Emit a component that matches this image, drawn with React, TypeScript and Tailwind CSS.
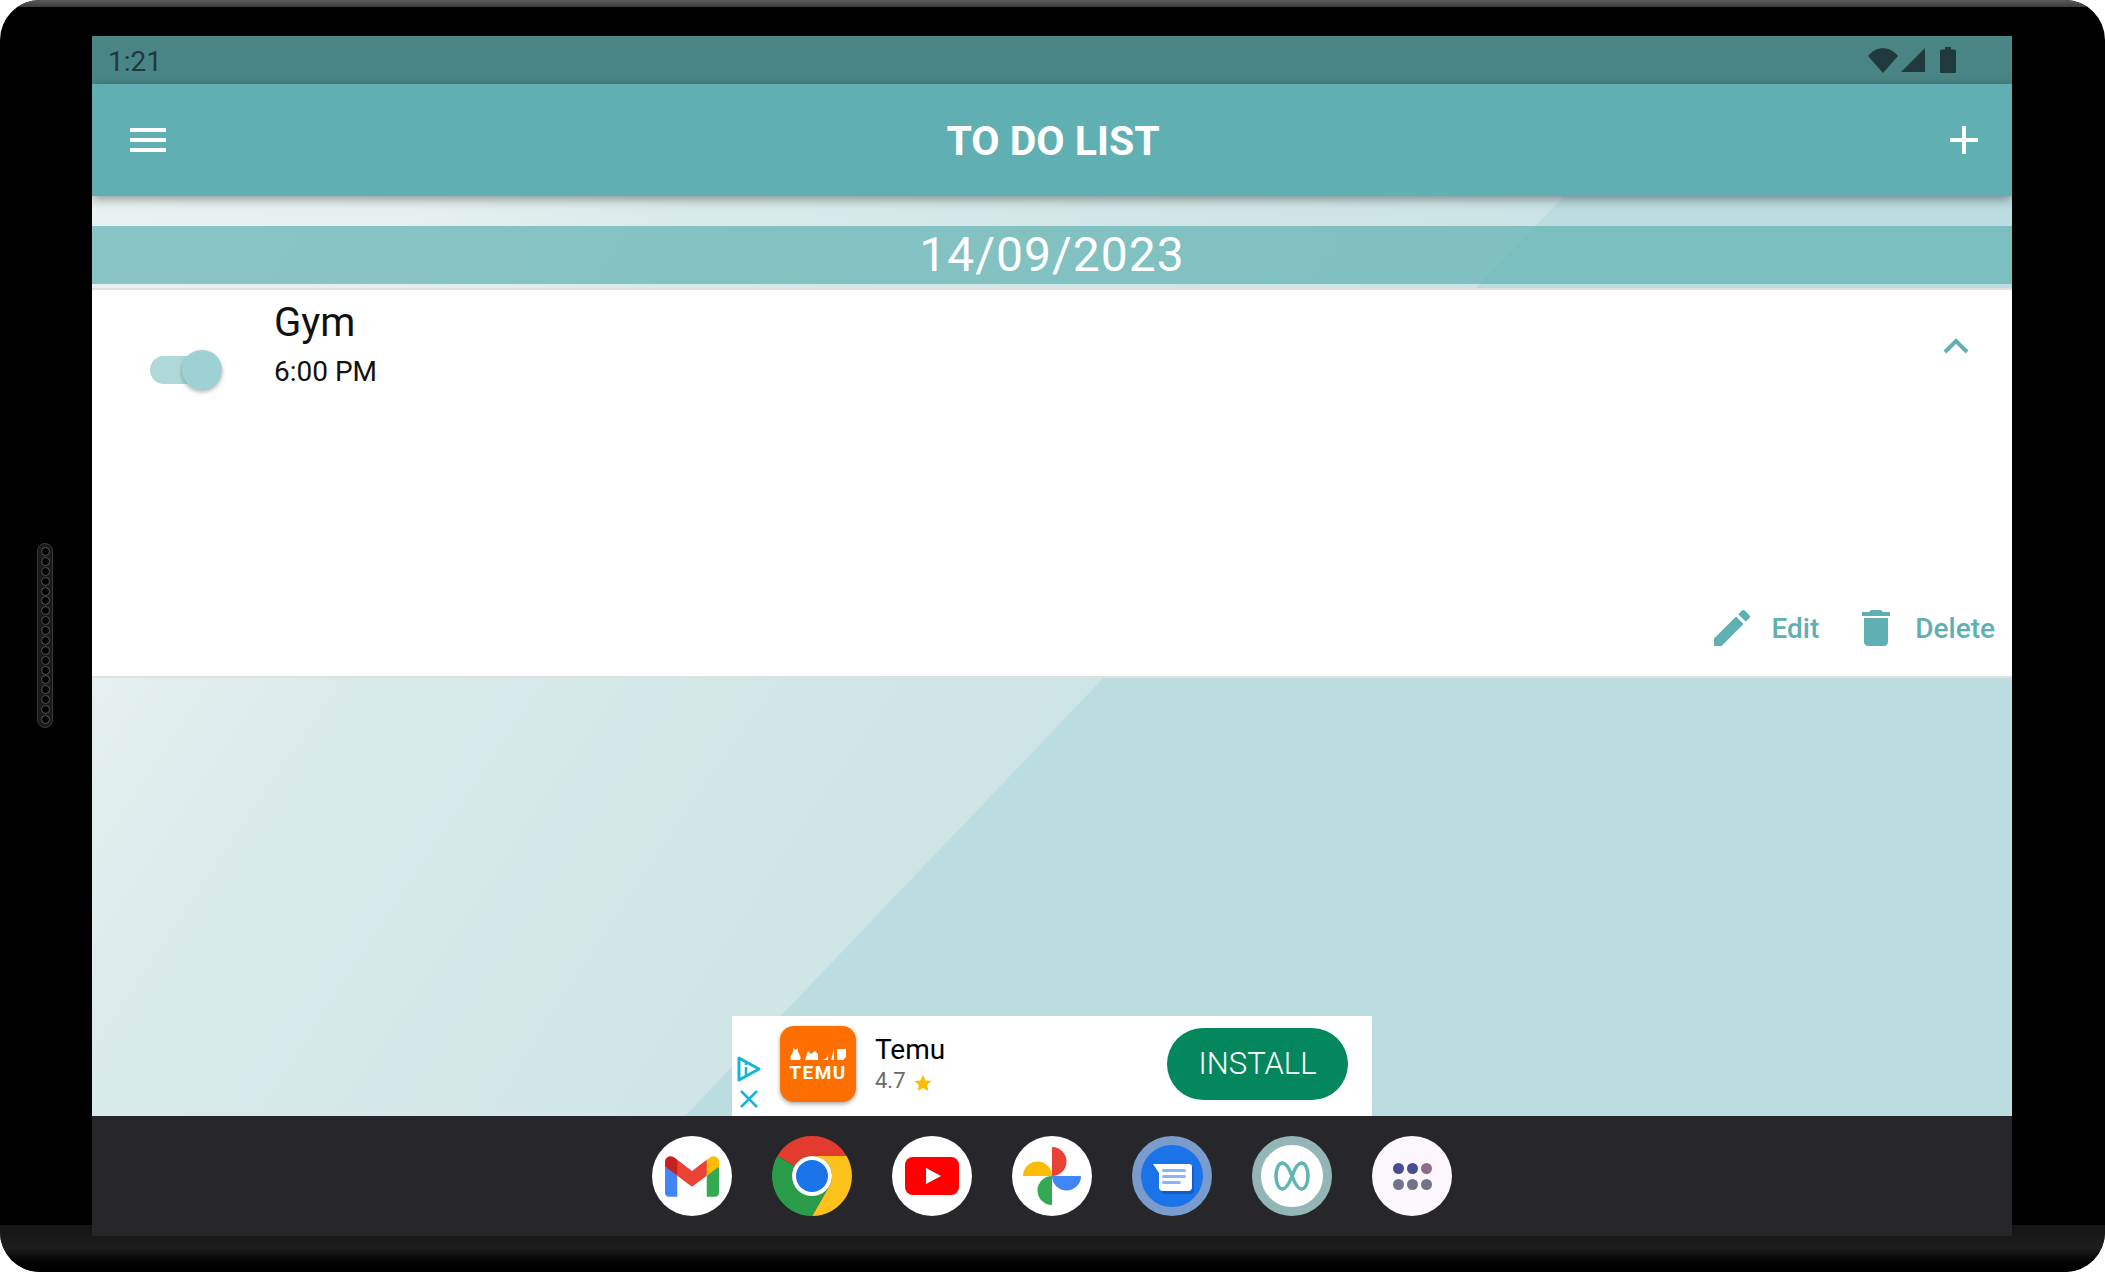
import { Plus } from "lucide-react";

const TEAL = "#60b0b3";

function Wallpaper() {
  return (
    <svg className="absolute inset-0 h-full w-full" viewBox="0 0 1920 920" preserveAspectRatio="none">
      <defs>
        <linearGradient id="wall" gradientUnits="userSpaceOnUse" x1="0" y1="0" x2="1500" y2="1000">
          <stop offset="0" stopColor="#e9f2f2" />
          <stop offset="0.15" stopColor="#e5f0f0" />
          <stop offset="0.28" stopColor="#d9eaea" />
          <stop offset="0.68" stopColor="#cbe3e4" />
          <stop offset="1" stopColor="#c4e0e1" />
        </linearGradient>
      </defs>
      <rect width="1920" height="920" fill="url(#wall)" />
      <polygon points="1472,0 1920,0 1920,920 593,920" fill="#bbdddf" />
    </svg>
  );
}

function StatusIcons() {
  return (
    <div className="flex items-center">
      <svg width="32" height="26" viewBox="0 0 32 26">
        <path d="M1 9 C9 -1.5 23 -1.5 31 9 L16 26 Z" fill="#20393c" />
      </svg>
      <svg width="24" height="24" viewBox="0 0 24 24" className="ml-[2px]">
        <path d="M24 0V24H0Z" fill="#20393c" />
      </svg>
      <svg width="16" height="26" viewBox="0 0 16 26" className="ml-[15px]">
        <path d="M5 0h6v2.500h3.500a1.500 1.500 0 0 1 1.500 1.500v20.500a1.500 1.500 0 0 1-1.500 1.500h-13a1.500 1.500 0 0 1-1.500-1.500v-20.500a1.500 1.500 0 0 1 1.500-1.500h3.500z" fill="#20393c" />
      </svg>
    </div>
  );
}

function Gmail() {
  return (
    <svg width="54" height="41" viewBox="0 0 256 193">
      <path fill="#4285F4" d="M58.182 192.05V93.14L27.507 65.077 0 49.504v125.091c0 9.658 7.825 17.455 17.455 17.455h40.727Z" />
      <path fill="#34A853" d="M197.818 192.05h40.727c9.659 0 17.455-7.826 17.455-17.455V49.505l-31.156 17.837-27.026 25.798v98.91Z" />
      <path fill="#EA4335" d="m58.182 93.14-4.174-38.647 4.174-36.989L128 69.868l69.818-52.364 4.669 34.992-4.669 40.644L128 145.504z" />
      <path fill="#FBBC04" d="M197.818 17.504V93.14L256 49.504V26.231c0-21.585-24.64-33.89-41.89-20.945l-16.292 12.218Z" />
      <path fill="#C5221F" d="m0 49.504 26.759 20.07L58.182 93.14V17.504L41.89 5.286C24.61-7.66 0 4.646 0 26.23v23.273Z" />
    </svg>
  );
}

function Chrome() {
  return (
    <svg width="80" height="80" viewBox="0 0 80 80">
      <path fill="#e33b2e" d="M40 0A40 40 0 0 1 74.640 20H40A20 20 0 0 0 22.680 30L5.360 20A40 40 0 0 1 40 0Z" />
      <path fill="#fcc11a" d="M74.640 20A40 40 0 0 1 40 80L57.320 50A20 20 0 0 0 40 20Z" />
      <path fill="#2a9d4a" d="M5.360 20A40 40 0 0 0 40 80L57.320 50A20 20 0 0 1 22.680 30Z" />
      <circle cx="40" cy="40" r="20" fill="#fff" />
      <circle cx="40" cy="40" r="16" fill="#1a73e8" />
    </svg>
  );
}

function YouTube() {
  return (
    <svg width="56" height="40" viewBox="0 0 56 40">
      <rect x="1" y="1" width="54" height="38" rx="8" fill="#ff0000" />
      <path d="M22 13 L37 21 L22 29 Z" fill="#fff" transform="translate(0 -1)" />
    </svg>
  );
}

function Photos() {
  return (
    <svg width="80" height="80" viewBox="0 0 80 80">
      <path fill="#ea4335" d="M40 11A14.500 14.500 0 0 1 40 40Z" />
      <path fill="#4285f4" d="M69 40A14.500 14.500 0 0 1 40 40Z" />
      <path fill="#34a853" d="M40 69A14.500 14.500 0 0 1 40 40Z" />
      <path fill="#fbbc04" d="M11 40A14.500 14.500 0 0 1 40 40Z" />
    </svg>
  );
}

function Messages() {
  return (
    <svg width="80" height="80" viewBox="0 0 80 80">
      <path d="M21 28.500H58a3 3 0 0 1 3 3V52a4 4 0 0 1-4 4H32a4 4 0 0 1-4-4V37Z" fill="#155fc4" transform="translate(1 2)" />
      <path d="M21 28H57a3 3 0 0 1 3 3V51a4 4 0 0 1-4 4H31a4 4 0 0 1-4-4V37Z" fill="#fff" />
      <rect x="30" y="33" width="24" height="3" rx="1.500" fill="#8ab4f8" />
      <rect x="30" y="39" width="24" height="3" rx="1.500" fill="#8ab4f8" />
      <rect x="30" y="45" width="19" height="3" rx="1.500" fill="#8ab4f8" />
    </svg>
  );
}

function Infinity() {
  return (
    <svg width="36" height="32" viewBox="0 0 36 32">
      <path
        d="M18 16C15 8 12 3 8.500 3C4.500 3 2 9 2 16s2.500 13 6.500 13C12 29 15 24 18 16s6-13 9.500-13C31.500 3 34 9 34 16s-2.500 13-6.500 13C24 29 21 24 18 16Z"
        fill="none"
        stroke="#5fb5b5"
        strokeWidth="3.500"
      />
    </svg>
  );
}

function Dock() {
  const dots = ["#474e93", "#474e93", "#8f6b8b", "#73748a", "#73748a", "#73748a"];
  return (
    <div className="flex h-[120px] shrink-0 items-center justify-center gap-10 bg-[#27262b]">
      <div className="flex h-20 w-20 items-center justify-center rounded-full bg-white">
        <Gmail />
      </div>
      <div className="h-20 w-20 rounded-full">
        <Chrome />
      </div>
      <div className="flex h-20 w-20 items-center justify-center rounded-full bg-white">
        <YouTube />
      </div>
      <div className="h-20 w-20 rounded-full bg-white">
        <Photos />
      </div>
      <div className="h-20 w-20 rounded-full border-[9px] border-[#7a9ccc] bg-[#1a73e8]">
        <div className="-m-[9px]">
          <Messages />
        </div>
      </div>
      <div className="flex h-20 w-20 items-center justify-center rounded-full border-[9px] border-[#93b5b5] bg-white">
        <Infinity />
      </div>
      <div className="flex h-20 w-20 items-center justify-center rounded-full bg-[#fbf7fc]">
        <div className="grid grid-cols-3 gap-x-[3px] gap-y-[5px]">
          {dots.map((c, i) => (
            <span key={i} className="h-[11px] w-[11px] rounded-full" style={{ backgroundColor: c }} />
          ))}
        </div>
      </div>
    </div>
  );
}

function AdBanner() {
  return (
    <div className="absolute bottom-0 left-[640px] flex h-[100px] w-[640px] items-center bg-white pb-[4px] font-['Roboto',sans-serif]">
      <div className="absolute bottom-[7px] left-[5px] flex flex-col items-center gap-[7px]">
        <svg width="24" height="26" viewBox="0 0 24 26">
          <path d="M2 2L22 13L2 24Z" fill="none" stroke="#18b4d8" strokeWidth="3" strokeLinejoin="round" />
          <path d="M9 11v8M9 7v2" stroke="#18b4d8" strokeWidth="2.500" />
        </svg>
        <svg width="20" height="20" viewBox="0 0 20 20">
          <path d="M2 2L18 18M18 2L2 18" stroke="#18b4d8" strokeWidth="2.500" />
        </svg>
      </div>
      <div className="ml-[48px] flex h-[76px] w-[76px] flex-col items-center justify-center rounded-[14px] bg-[#fe6f00] shadow-[0_2px_4px_rgba(0,0,0,0.35)]">
        <svg width="60" height="14" viewBox="0 0 60 14">
          <path d="M3 13C1 9 5 7 5 4V1L7.500 3L10 1V4C10 7 14 9 12 13ZM17 13L20 4L23 7L27 4L30 7V13ZM33 13C37 13 39 11 40 8V13ZM43 13L46 2V13ZM49 2H58V10L55 13H49Z" fill="#fff" />
        </svg>
        <span className="mt-[3px] text-[19px] font-bold leading-[18px] tracking-[1.5px] text-white">TEMU</span>
      </div>
      <div className="ml-[19px] flex flex-col">
        <span className="text-[28px] leading-[34px] text-black">Temu</span>
        <div className="flex items-center gap-[8px]">
          <span className="text-[22px] leading-[28px] text-[#6a6a70]">4.7</span>
          <svg width="18" height="18" viewBox="0 0 24 24" className="mt-[3px]">
            <path d="M12 1l3.400 7.600 8.100.8-6.100 5.400 1.800 8L12 18.600 4.800 22.800l1.800-8L.5 9.400l8.100-.8z" fill="#fbbc04" />
          </svg>
        </div>
      </div>
      <button className="ml-auto mr-[24px] flex h-[72px] w-[181px] items-center justify-center rounded-full bg-[#05875e] text-[31px] font-light text-white">
        INSTALL
      </button>
    </div>
  );
}

function ToDoCard() {
  return (
    <div className="relative flex h-[386px] flex-col bg-white">
      <div className="flex items-start pl-[58px] pr-[42px]">
        <div className="relative mt-[66px] h-[28px] w-[66px] rounded-full bg-[#afd9d9]">
          <span className="absolute -top-[6px] left-[32px] h-[40px] w-[40px] rounded-full bg-[#9dd1d3] shadow-[0_2px_4px_rgba(0,0,0,0.3)]" />
        </div>
        <div className="ml-[58px] flex flex-col pt-[9px]">
          <span className="text-[40px] leading-[48px] text-[#111]">Gym</span>
          <span className="mt-[8px] text-[28px] leading-[34px] text-[#111]">6:00 PM</span>
        </div>
        <svg width="28" height="18" viewBox="0 0 28 18" className="ml-auto mt-[47px]">
          <path d="M3 15L14 4L25 15" fill="none" stroke={TEAL} strokeWidth="4" />
        </svg>
      </div>
      <div className="mt-auto flex items-center justify-end pb-[24px] pr-[17px] text-[28px] font-medium text-[#60b0b3]">
        <svg width="48" height="48" viewBox="0 0 24 24" fill={TEAL}>
          <path d="M3 17.250V21h3.750L17.810 9.940l-3.750-3.750L3 17.250zM20.710 7.040c.39-.39.39-1.020 0-1.410l-2.340-2.340c-.39-.39-1.020-.39-1.410 0l-1.830 1.830 3.750 3.750 1.830-1.830z" />
        </svg>
        <span className="ml-[15px] mt-[2px]">Edit</span>
        <svg width="48" height="48" viewBox="0 0 24 24" fill={TEAL} className="ml-[33px]">
          <path d="M6 19c0 1.100.9 2 2 2h8c1.100 0 2-.9 2-2V7H6v12zM19 4h-3.500l-1-1h-5l-1 1H5v2h14V4z" />
        </svg>
        <span className="ml-[15px] mt-[2px]">Delete</span>
      </div>
      <div className="absolute inset-x-0 bottom-[-2px] h-[2px] bg-[#e0e0e0]" />
    </div>
  );
}

export default function App() {
  return (
    <div className="h-[1272px] w-[2105px] overflow-hidden bg-white font-['Roboto',sans-serif]">
      <div className="relative h-full w-full overflow-hidden rounded-[40px] bg-black">
        <div className="absolute inset-x-0 top-0 h-[7px] bg-gradient-to-b from-[#5c5c5c] to-[#3c3c3c]" />
        <div className="absolute inset-x-0 bottom-0 h-[47px] bg-gradient-to-b from-[#141414] via-[#1e1e1e] to-black" />

        {/* speaker grille */}
        <div className="absolute left-[37px] top-[543px] flex h-[185px] w-[16px] flex-col items-center justify-between rounded-full border border-[#3a3a3a] bg-[#1a1a1a] py-[3px]">
          {Array.from({ length: 18 }).map((_, i) => (
            <span key={i} className="h-[9px] w-[9px] rounded-full border border-[#555] bg-black" />
          ))}
        </div>

        <div className="relative ml-[92px] mt-9 flex h-[1200px] w-[1920px] flex-col">
          <div className="flex h-12 shrink-0 items-center justify-between bg-[#4a8585] pl-[16px] pr-[56px]">
            <span className="mt-[3px] text-[28px] text-[#20393c]">1:21</span>
            <StatusIcons />
          </div>

          <header className="relative z-10 flex h-[112px] shrink-0 items-center justify-between bg-[#60b0b3] pl-[38px] pr-[24px] shadow-[0_3px_10px_rgba(0,0,0,0.4)]">
            <div className="flex w-9 flex-col gap-[6px]">
              <span className="h-1 bg-white" />
              <span className="h-1 bg-white" />
              <span className="h-1 bg-white" />
            </div>
            <h1 className="mt-[3px] text-[41px] font-bold text-white">TO DO LIST</h1>
            <Plus size={48} color="#fff" strokeWidth={2} strokeLinecap="butt" />
          </header>

          <main className="relative flex-1 overflow-hidden">
            <Wallpaper />
            <div className="relative flex flex-col pt-[30px]">
              <div className="flex h-[58px] items-center justify-center bg-[#5baeae]/67 text-[48px] tracking-[1px] text-white">
                14/09/2023
              </div>
              <div className="mt-[4px] h-[2px] bg-[#e0e0e0]" />
              <ToDoCard />
            </div>
            <AdBanner />
          </main>

          <Dock />
        </div>
      </div>
    </div>
  );
}
